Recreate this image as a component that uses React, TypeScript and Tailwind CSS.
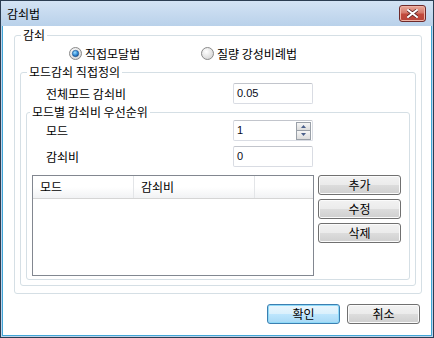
import type { ReactNode } from 'react'

function Radio({ checked }: { checked?: boolean }) {
  return (
    <svg width="13" height="13" viewBox="0 0 13 13" className="shrink-0">
      <defs>
        <radialGradient id="rb" cx="40%" cy="35%" r="70%">
          <stop offset="0" stopColor="#ffffff" />
          <stop offset="1" stopColor="#d4d4d4" />
        </radialGradient>
        <radialGradient id="rd" cx="40%" cy="35%" r="70%">
          <stop offset="0" stopColor="#9fe0ff" />
          <stop offset="0.6" stopColor="#2f8ad6" />
          <stop offset="1" stopColor="#1c4f86" />
        </radialGradient>
      </defs>
      <circle cx="6.5" cy="6.5" r="6" fill="url(#rb)" stroke="#8a8a8a" strokeWidth="1" />
      {checked ? <circle cx="6.5" cy="6.5" r="3.2" fill="url(#rd)" stroke="#1d4f8b" strokeWidth="0.6" /> : null}
    </svg>
  )
}

function Button({ children, primary }: { children: ReactNode; primary?: boolean }) {
  return (
    <button
      type="button"
      className={
        primary
          ? 'w-[73px] h-[20px] rounded-[3px] border border-[#3c7fb1] bg-[linear-gradient(#eaf6fd_0%,#d9f0fc_50%,#bee6fd_50%,#a7d9f5_100%)] shadow-[inset_0_0_0_1px_#8fdaf8] text-[12px] leading-[14px] text-black'
          : 'w-[73px] h-[20px] rounded-[3px] border border-[#707070] bg-[linear-gradient(#f2f2f2_0%,#ebebeb_50%,#dddddd_50%,#cfcfcf_100%)] shadow-[inset_0_0_0_1px_#fbfbfb] text-[12px] leading-[14px] text-black'
      }
    >
      {children}
    </button>
  )
}

function SideButton({ children }: { children: ReactNode }) {
  return (
    <button
      type="button"
      className="w-[83px] h-[20px] rounded-[3px] border border-[#707070] bg-[linear-gradient(#f2f2f2_0%,#ebebeb_50%,#dddddd_50%,#cfcfcf_100%)] shadow-[inset_0_0_0_1px_#fbfbfb] text-[12px] leading-[14px] text-black"
    >
      {children}
    </button>
  )
}

function TextBox({ value, spin }: { value: string; spin?: boolean }) {
  return (
    <div className="w-[80px] h-[21px] flex items-center rounded-[2px] border border-[#d9dce3] border-t-[#c2c5cc] bg-white">
      <span className="flex-1 pl-[3px] font-['Liberation_Sans',sans-serif] text-[11px] leading-[13px] text-[#0a0a1a]">{value}</span>
      {spin ? (
        <div className="flex flex-col mr-[1px]">
          <div className="w-[15px] h-[9px] flex items-center justify-center border border-[#9aa0a8] bg-[linear-gradient(#f6f6f6,#dcdcdc)]">
            <svg width="5" height="3" viewBox="0 0 5 3"><path d="M0 3 L2.5 0 L5 3 Z" fill="#4a5f8a" /></svg>
          </div>
          <div className="w-[15px] h-[9px] flex items-center justify-center border border-t-0 border-[#9aa0a8] bg-[linear-gradient(#f6f6f6,#dcdcdc)]">
            <svg width="5" height="3" viewBox="0 0 5 3"><path d="M0 0 L5 0 L2.5 3 Z" fill="#4a5f8a" /></svg>
          </div>
        </div>
      ) : null}
    </div>
  )
}

export default function App() {
  return (
    <div className="w-[434px] h-[338px] flex flex-col border border-[#2b3d52] bg-[#bcd3ec] font-['Noto_Sans_CJK_KR',sans-serif] text-black">
      {/* title bar */}
      <div className="h-[25px] flex items-center justify-between pl-[6px] pr-[7px] bg-[linear-gradient(#d3e3f4,#b9d1ea)]">
        <span className="text-[12px] leading-[14px]">감쇠법</span>
        <div className="w-[27px] h-[17px] flex items-center justify-center rounded-[3px] border border-[#6e2a2a] bg-[linear-gradient(#e9a99a_0%,#d57a6c_45%,#c24a3c_55%,#b8453a_100%)] shadow-[inset_0_0_0_1px_#efb3a6]">
          <svg width="11" height="9" viewBox="0 0 11 9">
            <path d="M1 1 L10 8 M10 1 L1 8" stroke="#5a2020" strokeWidth="3.4" strokeLinecap="square" />
            <path d="M1 1 L10 8 M10 1 L1 8" stroke="#ffffff" strokeWidth="2" strokeLinecap="square" />
          </svg>
        </div>
      </div>

      {/* client area */}
      <div className="flex-1 mx-[1px] mb-[1px] flex flex-col bg-white border-x border-b border-[#42a6d6]">
        <fieldset className="ml-[11px] mt-[2px] w-[408px] h-[266px] rounded-[3px] border border-[#d5dfe5]">
          <legend className="ml-[6px] px-[2px] text-[12px] leading-[14px]">감쇠</legend>
          <div className="mt-[5px] h-[13px] pl-[54px] flex items-center text-[12px] leading-[14px]">
            <div className="w-[132px] flex items-center gap-[3px]">
              <Radio checked />
              <span>직접모달법</span>
            </div>
            <div className="flex items-center gap-[3px]">
              <Radio />
              <span>질량 강성비례법</span>
            </div>
          </div>

          <fieldset className="ml-[5px] mt-[5px] w-[396px] h-[221px] rounded-[3px] border border-[#d5dfe5]">
            <legend className="ml-[6px] px-[2px] text-[12px] leading-[14px]">모드감쇠 직접정의</legend>
            <div className="mt-[4px] pl-[25px] flex items-center text-[12px] leading-[14px]">
              <span className="w-[187px]">전체모드 감쇠비</span>
              <TextBox value="0.05" />
            </div>

            <fieldset className="ml-[5px] mt-[1px] w-[384px] h-[175px] rounded-[3px] border border-[#d5dfe5]">
              <legend className="ml-[3px] px-[2px] text-[12px] leading-[14px]">모드별 감쇠비 우선순위</legend>
              <div className="mt-[1px] pl-[19px] flex items-center text-[12px] leading-[14px]">
                <span className="w-[187px]">모드</span>
                <TextBox value="1" spin />
              </div>
              <div className="mt-[5px] pl-[19px] flex items-center text-[12px] leading-[14px]">
                <span className="w-[187px]">감쇠비</span>
                <TextBox value="0" />
              </div>

              <div className="mt-[8px] pl-[5px] flex items-start gap-[4px]">
                <div className="w-[282px] h-[101px] border border-[#828790] bg-white">
                  <div className="h-[23px] flex text-[12px] leading-[14px] bg-[linear-gradient(#ffffff_0%,#ffffff_50%,#f1f2f4_100%)] border-b border-[#d5d5d5]">
                    <div className="w-[101px] pl-[7px] flex items-center border-r border-[#e3e5e8]">모드</div>
                    <div className="w-[121px] pl-[7px] flex items-center border-r border-[#e3e5e8]">감쇠비</div>
                    <div className="flex-1" />
                  </div>
                </div>
                <div className="flex flex-col gap-[4px]">
                  <SideButton>추가</SideButton>
                  <SideButton>수정</SideButton>
                  <SideButton>삭제</SideButton>
                </div>
              </div>
            </fieldset>
          </fieldset>
        </fieldset>

        <div className="mt-[10px] pr-[11px] flex justify-end gap-[7px]">
          <Button primary>확인</Button>
          <Button>취소</Button>
        </div>
      </div>
    </div>
  )
}
